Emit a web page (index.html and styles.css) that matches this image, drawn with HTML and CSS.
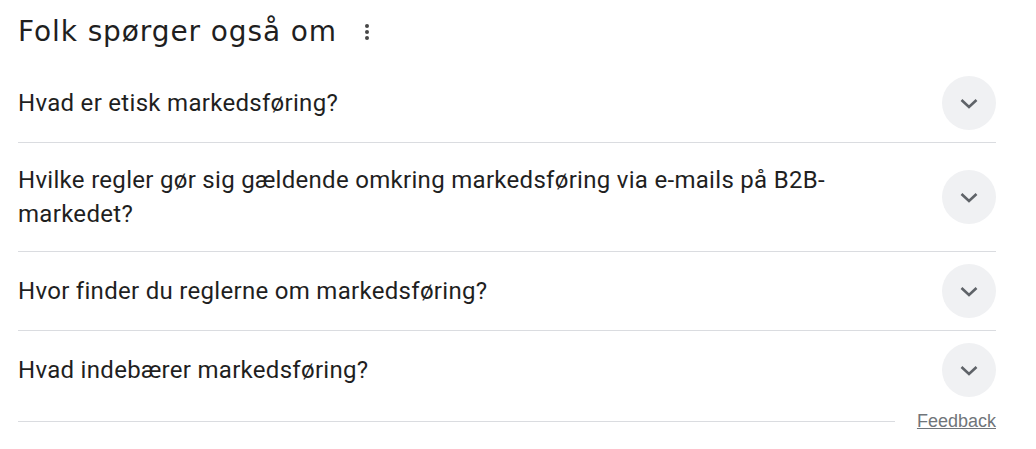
FILE: index.html
```html
<!DOCTYPE html>
<html lang="da">
<head>
<meta charset="utf-8">
<link rel="stylesheet" href="styles.css">
</head>
<body>
<div class="paa">
  <div class="title">
    <h2>Folk spørger også om</h2>
    <span class="more">
      <svg width="6" height="18" viewBox="0 0 6 18"><circle cx="3" cy="3" r="2"/><circle cx="3" cy="9" r="2"/><circle cx="3" cy="15" r="2"/></svg>
    </span>
  </div>
  <div class="q">
    <div class="qt">Hvad er etisk markedsføring?</div>
    <div class="btn"><svg width="24" height="24" viewBox="0 0 24 24"><polyline points="4.5,9 12,16 19.5,9"/></svg></div>
  </div>
  <div class="q">
    <div class="qt">Hvilke regler gør sig gældende omkring markedsføring via e-mails på B2B-markedet?</div>
    <div class="btn"><svg width="24" height="24" viewBox="0 0 24 24"><polyline points="4.5,9 12,16 19.5,9"/></svg></div>
  </div>
  <div class="q">
    <div class="qt">Hvor finder du reglerne om markedsføring?</div>
    <div class="btn"><svg width="24" height="24" viewBox="0 0 24 24"><polyline points="4.5,9 12,16 19.5,9"/></svg></div>
  </div>
  <div class="q last">
    <div class="qt">Hvad indebærer markedsføring?</div>
    <div class="btn"><svg width="24" height="24" viewBox="0 0 24 24"><polyline points="4.5,9 12,16 19.5,9"/></svg></div>
  </div>
  <div class="foot">
    <div class="line"></div>
    <a class="fb" href="#">Feedback</a>
  </div>
</div>
</body>
</html>
```
FILE: styles.css
```css
html, body { margin: 0; padding: 0; background: #fff; }
body { font-family: Roboto, "Liberation Sans", Arial, sans-serif; color: #1f1f1f; }
.paa { width: 978px; padding-left: 18px; }
.title { height: 64px; display: flex; align-items: center; }
.title h2 { margin: 0; font-family: "DejaVu Sans", "Open Sans", sans-serif; font-weight: 400; font-size: 28px; letter-spacing: 0.9px; line-height: 36px; color: #1f1f1f; }
.more { display: flex; margin-left: 27px; fill: #474747; }
.q { display: flex; align-items: center; border-bottom: 1px solid #dadce0; }
.q.last { border-bottom: none; }
.qt { flex: 1; font-size: 24px; letter-spacing: 0.3px; line-height: 34px; padding: 20px 0; margin-right: 40px; }
.btn { width: 54px; height: 54px; border-radius: 50%; background: #f0f1f3; display: flex; align-items: center; justify-content: center; margin: 12px 0; flex: none; }
.btn svg { fill: none; stroke: #5f6368; stroke-width: 2.6; }
.foot { display: flex; align-items: center; height: 24px; }
.line { flex: 1; height: 1px; background: #dadce0; margin-right: 22px; }
.fb { font-family: Arial, "Liberation Sans", sans-serif; font-size: 18px; color: #70757a; text-decoration: underline; }
```
